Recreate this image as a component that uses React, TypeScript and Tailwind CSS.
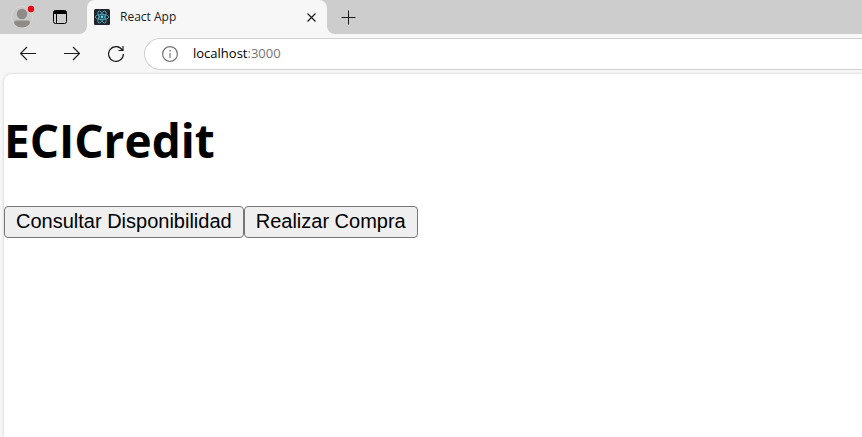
import React from "react";

const uiFont = "font-['Open_Sans','Noto_Sans',sans-serif]";

function ProfileIcon() {
  return (
    <svg width="26" height="26" viewBox="0 0 26 26" aria-hidden="true">
      <defs>
        <clipPath id="avatar">
          <circle cx="12" cy="14" r="10.5" />
        </clipPath>
      </defs>
      <circle cx="12" cy="14" r="10.5" fill="#cac8c6" stroke="#dad6d1" />
      <g fill="#8f8b88" clipPath="url(#avatar)">
        <circle cx="12" cy="11" r="5.2" />
        <path d="M4 19.5Q4 17.5 6 17.5H18Q20 17.5 20 19.5Q19 25 12 25Q5 25 4 19.5Z" />
      </g>
      <circle cx="21" cy="6" r="3.2" fill="#e60b12" />
    </svg>
  );
}

function TabActionsIcon() {
  return (
    <svg width="14" height="14" viewBox="0 0 14 14" fill="none" aria-hidden="true">
      <rect x="0.5" y="0.5" width="13" height="13" rx="2" stroke="#000" />
      <path d="M0.5 4V2.5Q0.5 0.5 2.5 0.5H11.5Q13.5 0.5 13.5 2.5V4Z" fill="#000" />
      <path d="M3.5 4V13.5" stroke="#000" />
    </svg>
  );
}

function ReactIcon() {
  return (
    <svg width="16" height="16" viewBox="0 0 16 16" fill="none" className="shrink-0" aria-hidden="true">
      <rect width="16" height="16" rx="1.5" fill="#222428" />
      <g stroke="#50b4ce" strokeWidth="0.8">
        <ellipse cx="8" cy="8" rx="6.8" ry="2.6" />
        <ellipse cx="8" cy="8" rx="6.8" ry="2.6" transform="rotate(60 8 8)" />
        <ellipse cx="8" cy="8" rx="6.8" ry="2.6" transform="rotate(120 8 8)" />
      </g>
      <circle cx="8" cy="8" r="1.4" fill="#61dafb" />
    </svg>
  );
}

function ArrowIcon({ forward = false }: { forward?: boolean }) {
  return (
    <svg width="16" height="16" viewBox="0 0 16 16" fill="none" stroke="#1b1b1b" strokeWidth="1.1" aria-hidden="true">
      <path d={forward ? "M0 7.5H15.5M9 1L15.5 7.5L9 14" : "M16 7.5H0.5M7 1L0.5 7.5L7 14"} />
    </svg>
  );
}

function RefreshIcon() {
  return (
    <svg width="16" height="16" viewBox="0 0 16 16" fill="none" stroke="#1b1b1b" strokeWidth="1.2" aria-hidden="true">
      <path d="M14.3 4.1A7.4 7.4 0 1 0 15.4 8M15 0V4.5H10.5" />
    </svg>
  );
}

function InfoIcon() {
  return (
    <svg width="16" height="16" viewBox="0 0 16 16" fill="none" stroke="#757575" strokeWidth="1.2" aria-hidden="true">
      <circle cx="8" cy="8" r="7.4" />
      <path d="M8 7V12" />
      <path d="M8 4V5.4" strokeWidth="1.4" />
    </svg>
  );
}

function TabStrip() {
  return (
    <div className="flex h-[34px]">
      <div className="flex w-[87px] shrink-0 items-center gap-[17px] rounded-br-lg bg-[#cdcdcd] pl-[10px]">
        <button aria-label="Profile" className="pb-[2px]"><ProfileIcon /></button>
        <button aria-label="Tab actions"><TabActionsIcon /></button>
      </div>
      <div className="w-60 shrink-0 bg-[#cdcdcd]">
        <div className="flex h-full items-center rounded-t-lg bg-[#f7f7f7] pr-[11px] pl-[7px]">
          <ReactIcon />
          <span className="grow pl-[10px] text-xs text-[#1b1b1b]">React App</span>
          <button aria-label="Close tab">
            <svg width="9" height="9" viewBox="0 0 9 9" stroke="#1b1b1b" strokeWidth="1.2" aria-hidden="true">
              <path d="M0.5 0.5L8.5 8.5M8.5 0.5L0.5 8.5" />
            </svg>
          </button>
        </div>
      </div>
      <div className="flex grow items-center rounded-bl-lg bg-[#cdcdcd] pl-[14px]">
        <button aria-label="New tab">
          <svg width="15" height="15" viewBox="0 0 15 15" stroke="#1b1b1b" aria-hidden="true">
            <path d="M0.5 7.5H14.5M7.5 0.5V14.5" />
          </svg>
        </button>
      </div>
    </div>
  );
}

function Toolbar() {
  return (
    <div className="flex h-10 items-center pl-5">
      <div className="flex shrink-0 gap-7">
        <button aria-label="Back"><ArrowIcon /></button>
        <button aria-label="Forward"><ArrowIcon forward /></button>
        <button aria-label="Refresh"><RefreshIcon /></button>
      </div>
      <div className="ml-5 flex h-8 grow items-center rounded-l-full border border-r-0 border-[#d0d0d0] bg-white pl-[17px]">
        <button aria-label="Site information"><InfoIcon /></button>
        <span className="pl-[15px] text-[13px] text-[#757575]">
          <span className="text-black">localhost</span>:3000
        </span>
      </div>
    </div>
  );
}

const pageButton =
  "h-8 rounded-[4px] border border-[#767676] bg-[#efefef] px-[11px] pb-[2px] font-['Liberation_Sans',Arial,sans-serif] text-xl leading-7 text-black";

export default function App() {
  return (
    <div className={`flex min-h-screen flex-col bg-[#f7f7f7] ${uiFont}`}>
      <header>
        <TabStrip />
        <Toolbar />
      </header>
      <main className="ml-1 grow rounded-tl-lg bg-white shadow-[0_0_3px_rgba(0,0,0,0.2)]">
        <h1 className="pt-[34px] text-[46px] leading-[64px] font-bold text-black">
          ECICredit
        </h1>
        <div className="flex pt-[34px]">
          <button className={pageButton}>Consultar Disponibilidad</button>
          <button className={pageButton}>Realizar Compra</button>
        </div>
      </main>
    </div>
  );
}
